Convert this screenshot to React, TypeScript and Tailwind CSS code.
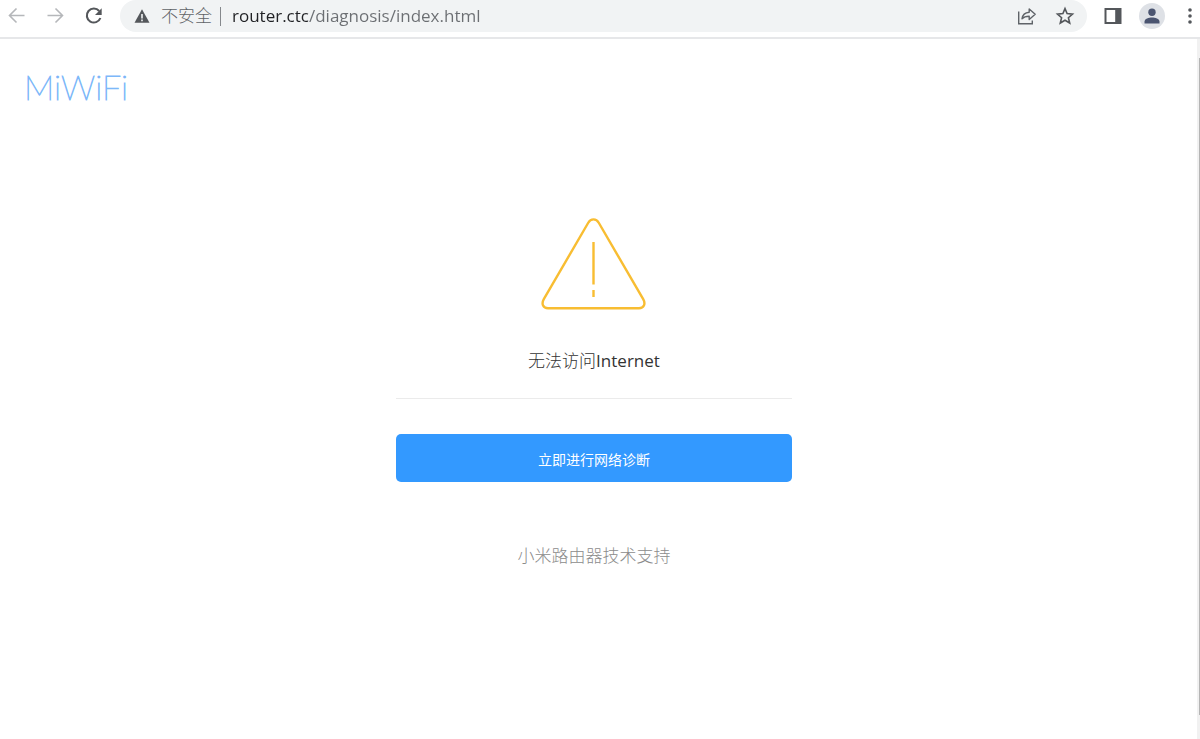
import React from 'react';

const BrowserBar = () => {
    return (
        <header className="flex h-[39px] items-start border-b-2 border-[#e6e7e9] bg-white">
            <nav className="flex h-8 w-[120px] shrink-0 items-center gap-[19px] pl-[7px]">
                <button type="button" aria-label="后退" className="text-[#b5b7ba]">
                    <svg width="20" height="20" viewBox="0 0 20 20" fill="none" stroke="currentColor" strokeWidth="1.6">
                        <path d="M17.5 9.5H3M9.5 2.5l-7 7 7 7" />
                    </svg>
                </button>
                <button type="button" aria-label="前进" className="text-[#b5b7ba]">
                    <svg width="20" height="20" viewBox="0 0 20 20" fill="none" stroke="currentColor" strokeWidth="1.6">
                        <path d="M1.5 9.5H16M9.5 2.5l7 7-7 7" />
                    </svg>
                </button>
                <button type="button" aria-label="重新加载" className="text-[#54575b]">
                    <svg width="20" height="20" viewBox="0 0 20 20" fill="none">
                        <path d="M14.2 5A7 7 0 1 0 15.4 12" stroke="currentColor" strokeWidth="2.1" />
                        <path d="M16.7 2.2v6.7H10z" fill="currentColor" />
                    </svg>
                </button>
            </nav>

            <div className="flex h-8 min-w-0 flex-1 items-center rounded-full bg-[#f1f3f4] pr-3 pl-[14px]">
                <svg width="16" height="16" viewBox="0 0 16 16" className="shrink-0">
                    <path d="M8 1.2l7.5 13.6H.5z" fill="#54575b" />
                    <path d="M8 6v4.4M8 11.6v1.6" stroke="#f1f3f4" strokeWidth="1.6" />
                </svg>
                <label htmlFor="address" className="ml-[11px] text-[17px] font-light whitespace-nowrap text-[#5f6368]">
                    不安全
                </label>
                <span className="mx-2 h-[19px] w-px bg-[#85888c]" />
                {/* the host part is darker than the path */}
                <input
                    id="address"
                    type="text"
                    className="ml-[3px] min-w-0 flex-1 bg-[linear-gradient(to_right,#202124_76px,#6b6e72_76px)] bg-clip-text text-[17px] text-transparent outline-none"
                    defaultValue="router.ctc/diagnosis/index.html"
                />
                <div className="flex items-center gap-[18px]">
                    <button type="button" aria-label="分享" className="text-[#5f6368]">
                        <svg width="20" height="20" viewBox="0 0 20 20" fill="none" stroke="currentColor" strokeWidth="1.4">
                            <path d="M1.7 5.5v12.2h13.6v-3.2" />
                            <path d="M5 12.8c.6-4.3 3-6.3 7.2-6.6V3l6 5.3-6 5.2v-3.3c-3.2 0-5.4.6-7.2 2.6z" strokeLinejoin="round" />
                        </svg>
                    </button>
                    <button type="button" aria-label="收藏" className="text-[#54575b]">
                        <svg width="20" height="20" viewBox="0 0 20 20" fill="none" stroke="currentColor" strokeWidth="1.6">
                            <path d="M10 2.6l2.1 5 5.4.5-4.1 3.6 1.3 5.3-4.7-2.8L5.3 17l1.3-5.3-4.1-3.6 5.4-.5z" />
                        </svg>
                    </button>
                </div>
            </div>

            <div className="flex h-8 shrink-0 items-center pl-[17px]">
                <button type="button" aria-label="侧边栏">
                    <svg width="18" height="18" viewBox="0 0 18 18">
                        <path d="M.5 1h17v16H.5z" fill="#54575b" />
                        <path d="M2.5 3h8.7v12H2.5z" fill="#fff" />
                    </svg>
                </button>
                <button
                    type="button"
                    aria-label="用户"
                    className="ml-[17px] flex size-[26px] items-center justify-center rounded-full bg-[#dee1e6]"
                >
                    <svg width="16" height="16" viewBox="0 0 16 16" fill="#4a5470">
                        <circle cx="8" cy="4.2" r="3.7" />
                        <path d="M.5 15.5v-1.8C.5 11 4.8 9.6 8 9.6s7.5 1.4 7.5 4.1v1.8z" />
                    </svg>
                </button>
                <button type="button" aria-label="菜单" className="ml-[17px]">
                    <svg width="18" height="18" viewBox="0 0 18 18" fill="#54575b">
                        <circle cx="8" cy="3" r="1.8" />
                        <circle cx="8" cy="9" r="1.8" />
                        <circle cx="8" cy="15" r="1.8" />
                    </svg>
                </button>
            </div>
        </header>
    );
};

const WarningIcon = () => (
    <svg width="108" height="96" viewBox="0 0 108 96" fill="none" stroke="#f8bd32" strokeWidth="2.4">
        <path
            d="M48.1 6 3.8 82.2C1.1 87 3.2 91.2 8 91.2h91c4.8 0 6.9-4.2 4.2-9L58.9 6c-2.8-4.8-8-4.8-10.8 0z"
            strokeLinejoin="round"
        />
        <path d="M53.5 25v42.5M53.5 73v7" />
    </svg>
);

const App = () => {
    return (
        <div className="flex min-h-screen flex-col overflow-hidden bg-white font-['Open_Sans','Noto_Sans_CJK_SC',sans-serif]">
            <BrowserBar />
            <div className="flex flex-1">
                <main className="flex-1 pr-[9px]">
                    <a
                        href="#"
                        className="ml-6 block w-fit pt-7 font-['Lato'] text-[34px] leading-10 font-thin text-[#5ca5f7] [-webkit-text-stroke:1px_#7db8f9]"
                    >
                        MiWiFi
                    </a>
                    <section className="mx-auto flex w-[396px] max-w-full flex-col items-center pt-[110px]">
                        <WarningIcon />
                        <h1 className="mt-9 text-[17px] leading-6 text-[#333]">
                            <span className="font-light">无法访问</span>Internet
                        </h1>
                        <hr className="mt-[25px] w-full border-[#ebebeb]" />
                        <button
                            type="button"
                            className="mt-[35px] h-12 w-full rounded-[5px] bg-[#3399ff] pt-1 text-sm text-white"
                        >
                            立即进行网络诊断
                        </button>
                        <a href="#" className="mt-[62px] text-[17px] leading-6 font-light text-[#8c8c8c]">
                            小米路由器技术支持
                        </a>
                    </section>
                </main>
                <div className="flex w-[3px] flex-col items-end bg-[#f1f1f1] pt-[19px] pb-6">
                    <div className="w-px flex-1 bg-[#b5b5b5]" />
                </div>
            </div>
        </div>
    );
};

export default App;
